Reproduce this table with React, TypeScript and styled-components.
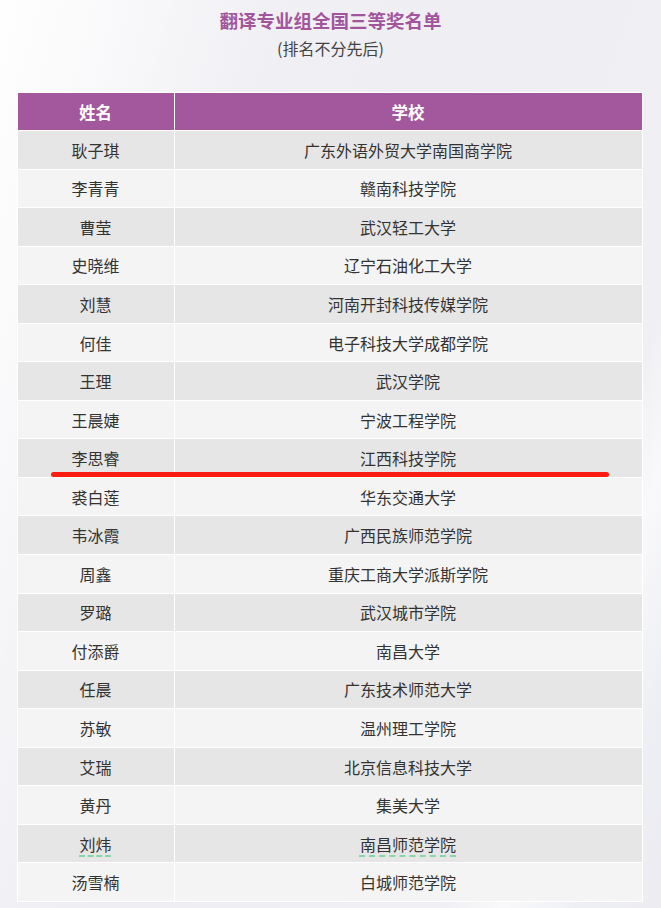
import React from "react";
import styled, { createGlobalStyle } from "styled-components";

interface Winner {
  name: string;
  school: string;
  checked?: boolean;
}

const winners: Winner[] = [
  { name: "耿子琪", school: "广东外语外贸大学南国商学院" },
  { name: "李青青", school: "赣南科技学院" },
  { name: "曹莹", school: "武汉轻工大学" },
  { name: "史晓维", school: "辽宁石油化工大学" },
  { name: "刘慧", school: "河南开封科技传媒学院" },
  { name: "何佳", school: "电子科技大学成都学院" },
  { name: "王理", school: "武汉学院" },
  { name: "王晨婕", school: "宁波工程学院" },
  { name: "李思睿", school: "江西科技学院" },
  { name: "裘白莲", school: "华东交通大学" },
  { name: "韦冰霞", school: "广西民族师范学院" },
  { name: "周鑫", school: "重庆工商大学派斯学院" },
  { name: "罗璐", school: "武汉城市学院" },
  { name: "付添爵", school: "南昌大学" },
  { name: "任晨", school: "广东技术师范大学" },
  { name: "苏敏", school: "温州理工学院" },
  { name: "艾瑞", school: "北京信息科技大学" },
  { name: "黄丹", school: "集美大学" },
  { name: "刘炜", school: "南昌师范学院", checked: true },
  { name: "汤雪楠", school: "白城师范学院" },
];

const App = () => {
  return (
    <>
      <GlobalStyle />
      <Page>
        <Title>翻译专业组全国三等奖名单</Title>
        <Subtitle>(排名不分先后)</Subtitle>
        <TableWrap>
          <ListTable>
            <thead>
              <HeadRow>
                <HeadCell $width="156px">姓名</HeadCell>
                <HeadCell>学校</HeadCell>
              </HeadRow>
            </thead>
            <tbody>
              {winners.map((w, i) => (
                <BodyRow key={w.name} $odd={i % 2 === 0}>
                  <BodyCell>
                    <CellText $checked={w.checked}>{w.name}</CellText>
                  </BodyCell>
                  <BodyCell>
                    <CellText $checked={w.checked}>{w.school}</CellText>
                  </BodyCell>
                </BodyRow>
              ))}
            </tbody>
          </ListTable>
          <Highlight />
        </TableWrap>
      </Page>
    </>
  );
};

export default App;

const GlobalStyle = createGlobalStyle`
  html, body {
    margin: 0;
    padding: 0;
  }
  body {
    font-family: "Noto Sans CJK SC", "Noto Sans", sans-serif;
    background: #f1f1f4;
  }
`;

const Page = styled.div`
  min-height: 908px;
  box-sizing: border-box;
  padding-top: 8px;
  display: flex;
  flex-direction: column;
  align-items: center;
  background:
    linear-gradient(
      105deg,
      rgba(255, 255, 255, 0.95) 0%,
      rgba(255, 255, 255, 0) 30%
    ),
    linear-gradient(
      110deg,
      #f4f4f7 0%,
      #eeeef3 45%,
      #f0f0f4 78%,
      #f9f9fb 84%,
      #eeeff4 92%,
      #ececf1 100%
    );
`;

const Title = styled.h1`
  margin: 0;
  font-size: 18.5px;
  line-height: 24px;
  font-weight: 700;
  color: #a2559c;
`;

const Subtitle = styled.div`
  margin-top: 5px;
  font-size: 16px;
  line-height: 22px;
  color: #444;
`;

const TableWrap = styled.div`
  position: relative;
  margin-top: 33px;
  width: 626px;
  transform: translateX(-1px);
`;

const ListTable = styled.table`
  width: 100%;
  border-collapse: collapse;
  border: 1px solid #fff;
  table-layout: fixed;
  font-size: 16px;
  color: #333;
`;

const HeadRow = styled.tr`
  height: 38px;
  background: #a3579d;
`;

const HeadCell = styled.th<{ $width?: string }>`
  width: ${(p) => p.$width || "auto"};
  border: 1px solid #fff;
  padding: 0;
  color: #fff;
  font-weight: 700;
  font-size: 16.5px;
  text-align: center;
`;

const BodyRow = styled.tr<{ $odd: boolean }>`
  height: 38.55px;
  background: ${(p) => (p.$odd ? "#e6e6e6" : "#f4f4f4")};
`;

const BodyCell = styled.td`
  border: 1px solid #fff;
  padding: 0;
  text-align: center;
  vertical-align: middle;
`;

const CellText = styled.span<{ $checked?: boolean }>`
  text-decoration: ${(p) => (p.$checked ? "underline dashed #86d6aa" : "none")};
  text-decoration-thickness: 2px;
  text-underline-offset: 5px;
`;

const Highlight = styled.div`
  position: absolute;
  left: 34px;
  top: 380px;
  width: 558px;
  height: 5px;
  border-radius: 3px;
  background: #fe1d10;
`;
